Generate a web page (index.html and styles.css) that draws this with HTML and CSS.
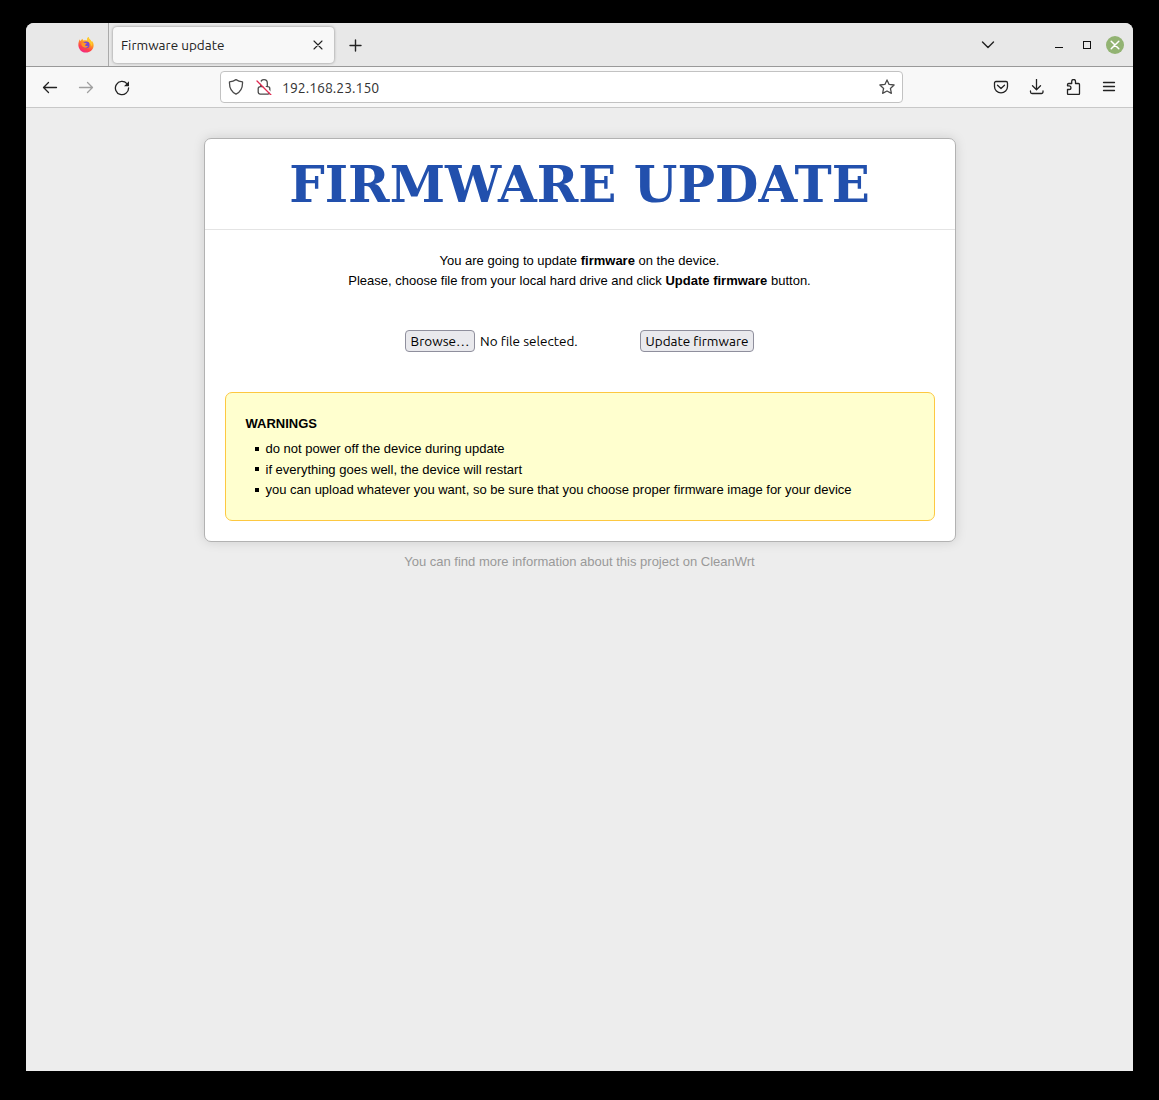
FILE: index.html
```html
<!DOCTYPE html>
<html lang="en">
<head>
<meta charset="utf-8">
<title>Firmware update</title>
<link rel="stylesheet" href="styles.css">
</head>
<body>
<div class="window">
  <header class="tabbar">
    <div class="pinned">
      <svg class="firefox" viewBox="0 0 16 16">
        <defs>
          <linearGradient id="flame" x1="0.8" y1="0" x2="0.3" y2="1"><stop offset="0" stop-color="#fff03a"/><stop offset=".4" stop-color="#ff9b23"/><stop offset=".72" stop-color="#ff4348"/><stop offset="1" stop-color="#f0258b"/></linearGradient>
        </defs>
        <path fill="url(#flame)" d="M.4 8.4C.2 5.800 1 3.700 1.700 2.200c.1.800.3 1.200.8 1.700C3.300 3 4 2.200 4.700 1.800c-.1.800.1 1.300.6 1.700C7 3 8.300 3.100 9 3.400 8.800 2 9.500.8 10.600.1c.2 1.800 1.700 2.500 2.700 4.100.3.300.5.500.6 1 .1-.5.100-.9-.1-1.400 1.600 1.700 2 3.400 1.800 5.300-.5 4-3.600 6.500-7.600 6.500S.7 12.500.4 8.400z"/>
        <path fill="#ffc72c" d="M9 3.400C8.800 2 9.500.8 10.600.1c.2 1.800 1.700 2.500 2.700 4.100 1 1.600 1.100 3.600.4 5.200C13 6.500 11 5 9 3.400z"/>
        <circle cx="8.200" cy="7.900" r="3.300" fill="#7547d8"/>
        <path fill="#ff9626" d="M3.500 6c1.400-.8 2.700-.6 3.600 0l1.700.2c-.2.900-1.500 1-1.700 1.700 0 1.200 1.800 1.500 3 .9-.6 1.600-2.300 2.300-3.900 1.600C4.200 9.600 3 8.100 3.500 6z"/>
      </svg>
    </div>
    <div class="tab">
      <span class="tab-title">Firmware update</span>
      <svg class="tab-close" viewBox="0 0 10 10"><path d="M1 1l8 8M9 1L1 9"/></svg>
    </div>
    <svg class="newtab" viewBox="0 0 14 14"><path d="M6.500 1v11M1 6.500h11"/></svg>
    <div class="window-controls">
      <svg class="chevron" viewBox="0 0 14 8"><path d="M1.500 1L7 6.600 12.500 1"/></svg>
      <span class="minimize"></span>
      <span class="maximize"></span>
      <span class="close"><svg viewBox="0 0 18 18"><path d="M5.200 5.200l7.600 7.600M12.800 5.200l-7.600 7.600"/></svg></span>
    </div>
  </header>
  <nav class="toolbar">
    <div class="nav-buttons">
      <svg class="icon" viewBox="0 0 16 16"><path d="M14.500 7.500H1.500M6.500 2.500L1.500 7.500l5 5"/></svg>
      <svg class="icon disabled" viewBox="0 0 16 16"><path d="M1.500 7.500h13M9.500 2.500l5 5-5 5"/></svg>
      <svg class="icon" viewBox="0 0 16 16"><path d="M12.900 3.600A6.600 6.600 0 1 0 14.600 8"/><path class="solid" d="M15 1.200v4.600q0 .4-.4.400H10z"/></svg>
    </div>
    <div class="urlbar">
      <svg class="icon soft" viewBox="0 0 16 16"><path d="M8 .6c2 1.400 4 2 6.500 2.300.3 5.400-1.700 10-6.500 12.300C3.200 12.900 1.200 8.300 1.500 2.900 4 2.600 6 2 8 .6z"/></svg>
      <svg class="icon soft lock" viewBox="0 0 16 16"><path d="M4.700 7.500V4a3.300 3.300 0 0 1 6.600 0v3.500M4.200 7.600h7.600a2 2 0 0 1 2 2v3.500a2 2 0 0 1-2 2H4.200a2 2 0 0 1-2-2V9.600a2 2 0 0 1 2-2z"/><path class="gap" d="M2.200 1.200l13.500 13.500"/><path class="strike" d="M1 2l14 14"/></svg>
      <span class="address">192.168.23.150</span>
      <svg class="icon soft star" viewBox="0 0 16 16"><path d="M8 .9l2.100 4.500 5 .6-3.700 3.400 1 4.900L8 12l-4.400 2.300 1-4.900L.9 6l5-.6z"/></svg>
    </div>
    <div class="tools">
      <svg class="icon" viewBox="0 0 16 16"><path d="M3 2.500h10a1.500 1.500 0 0 1 1.500 1.500v3.400a6.500 6.500 0 0 1-13 0V4A1.500 1.500 0 0 1 3 2.500zM4.500 6.200L8 9.500l3.500-3.300"/></svg>
      <svg class="icon" viewBox="0 0 16 16"><path d="M7.500 .5V10.500M3.500 6.800l4 4 4-4M1.500 12v1a1.500 1.500 0 0 0 1.500 1.500h9.500a1.500 1.500 0 0 0 1.500-1.500V12"/></svg>
      <svg class="icon" viewBox="0 0 16 16"><path d="M2.500 10.500V14.500a1 1 0 0 0 1 1h10a1 1 0 0 0 1-1V5.500a1 1 0 0 0-1-1H10.500V2.400a1.900 1.900 0 0 0-3.800 0v2.100H3.700a1.200 1.200 0 0 0-1.200 1.200v1.100h1.600a1.850 1.850 0 0 1 0 3.700H2.500"/></svg>
      <svg class="icon" viewBox="0 0 16 16"><path d="M2.500 3.500h11M2.500 7.500h11M2.500 11.500h11"/></svg>
    </div>
  </nav>
  <main class="page">
    <section class="card">
      <h1>FIRMWARE UPDATE</h1>
      <div class="content">
        <p class="intro">You are going to update <strong>firmware</strong> on the device.<br>Please, choose file from your local hard drive and click <strong>Update firmware</strong> button.</p>
        <form class="upload">
          <button type="button" class="browse"><span>Browse…</span></button>
          <span class="filename">No file selected.</span>
          <button type="button" class="submit"><span>Update firmware</span></button>
        </form>
        <div class="warnings">
          <strong>WARNINGS</strong>
          <ul>
            <li>do not power off the device during update</li>
            <li>if everything goes well, the device will restart</li>
            <li>you can upload whatever you want, so be sure that you choose proper firmware image for your device</li>
          </ul>
        </div>
      </div>
    </section>
    <footer>You can find more information about this project on CleanWrt</footer>
  </main>
</div>
</body>
</html>
```
FILE: styles.css
```css
* { box-sizing: border-box; }
body { margin: 0; height: 1100px; padding: 23px 26px 29px; background: #000; overflow: hidden; }
svg { display: block; flex: none; fill: none; stroke: #222; stroke-width: 1.3; stroke-linecap: round; stroke-linejoin: round; }
.window { height: 1048px; display: flex; flex-direction: column; background: #ededed; border-radius: 8px 8px 0 0; overflow: hidden; }
.tabbar { height: 44px; flex: none; display: flex; align-items: center; background: #e8e8e8; border-bottom: 1px solid #999; }
.pinned { width: 83px; height: 43px; display: flex; align-items: center; padding: 1px 0 0 52px; border-right: 1px solid #aaa; }
.firefox { width: 16px; height: 16px; stroke: none; }
.tab { width: 221px; height: 36px; margin: 1px 0 0 4px; display: flex; align-items: center; justify-content: space-between; padding: 0 11px 0 8px; background: #f8f8f8; border-radius: 4px; box-shadow: 0 0 3px rgba(0,0,0,.42); font: 13.5px "Ubuntu", "Noto Sans", sans-serif; color: #222; }
.tab-close { width: 10px; height: 10px; stroke-width: 1.1; }
.newtab { width: 14px; height: 14px; margin: 2px 0 0 15px; stroke-width: 1.4; }
.window-controls { margin-left: auto; display: flex; align-items: center; padding-right: 9px; }
.chevron { width: 14px; height: 8px; margin-right: 60px; stroke-width: 1.4; }
.minimize { width: 8px; height: 1px; margin: 5px 20px 0 0; background: #111; }
.maximize { width: 8px; height: 8px; margin-right: 15px; border: 1px solid #111; }
.close { width: 18px; height: 18px; border-radius: 50%; background: #92b372; }
.close svg { width: 18px; height: 18px; stroke: #fff; stroke-width: 1.5; }
.toolbar { height: 41px; flex: none; display: flex; align-items: center; background: #f8f8f8; border-bottom: 1px solid #c8c8c8; }
.icon { width: 16px; height: 16px; }
.soft { stroke: #4a4a4a; }
.disabled { stroke: #a0a0a0; }
.solid { fill: #222; stroke: none; }
.nav-buttons { width: 194px; padding: 1px 0 0 16px; display: flex; gap: 20px; }
.urlbar { width: 683px; height: 32px; display: flex; align-items: center; padding: 0 7px; background: #fff; border: 1px solid #c2c2c2; border-radius: 4px; }
.lock { margin-left: 12px; }
.lock .gap { stroke: #fff; stroke-width: 1.8; }
.lock .strike { stroke: #e22850; stroke-width: 1.3; }
.address { margin: 1px 0 0 10px; font: 14px "Ubuntu", "Noto Sans", sans-serif; color: #333; }
.star { margin-left: auto; }
.tools { margin-left: auto; padding-right: 16px; display: flex; gap: 20px; }
.page { flex: 1; padding: 30px 178px 0; font: 13px/20px "Liberation Sans", Arial, sans-serif; color: #000; }
.card { width: 752px; height: 404px; background: #fff; border: 1px solid #b2b2b2; border-radius: 7px; box-shadow: 0 0 12px rgba(0,0,0,.13); }
h1 { height: 91px; margin: 0; padding-right: 1px; border-bottom: 1px solid #e4e4e4; text-align: center; font: bold 50px/92px "DejaVu Serif", serif; color: #2250ad; white-space: nowrap; }
.content { padding: 21px 20px 0; }
.intro { margin: 0; padding-right: 1px; text-align: center; }
.upload { display: flex; align-items: center; height: 22px; margin: 39px 0 40px 180px; font: 13.5px "Ubuntu", "Noto Sans", sans-serif; white-space: nowrap; }
.upload button { height: 22px; padding: 0; display: flex; align-items: center; justify-content: center; font: inherit; color: #000; background: #e9e9ed; border: 1px solid #8f8f9d; border-radius: 4px; }
.upload .browse { width: 70px; }
.filename { width: 160px; margin-left: 5px; }
.upload .submit { width: 114px; }
.warnings { height: 129px; padding: 21px 20px 21px 19.500px; background: #ffffcf; border: 1px solid #fdc841; border-radius: 7px; }
.warnings strong { display: block; }
.warnings ul { margin: 5px 0 0; padding: 0 0 0 20px; list-style: none; }
.warnings li { line-height: 20.500px; display: flex; align-items: center; }
.warnings li::before { content: ""; width: 4px; height: 4px; margin: -1px 7px 0 -11px; background: #000; }
footer { margin-top: 10px; text-align: center; color: #999; }
```
